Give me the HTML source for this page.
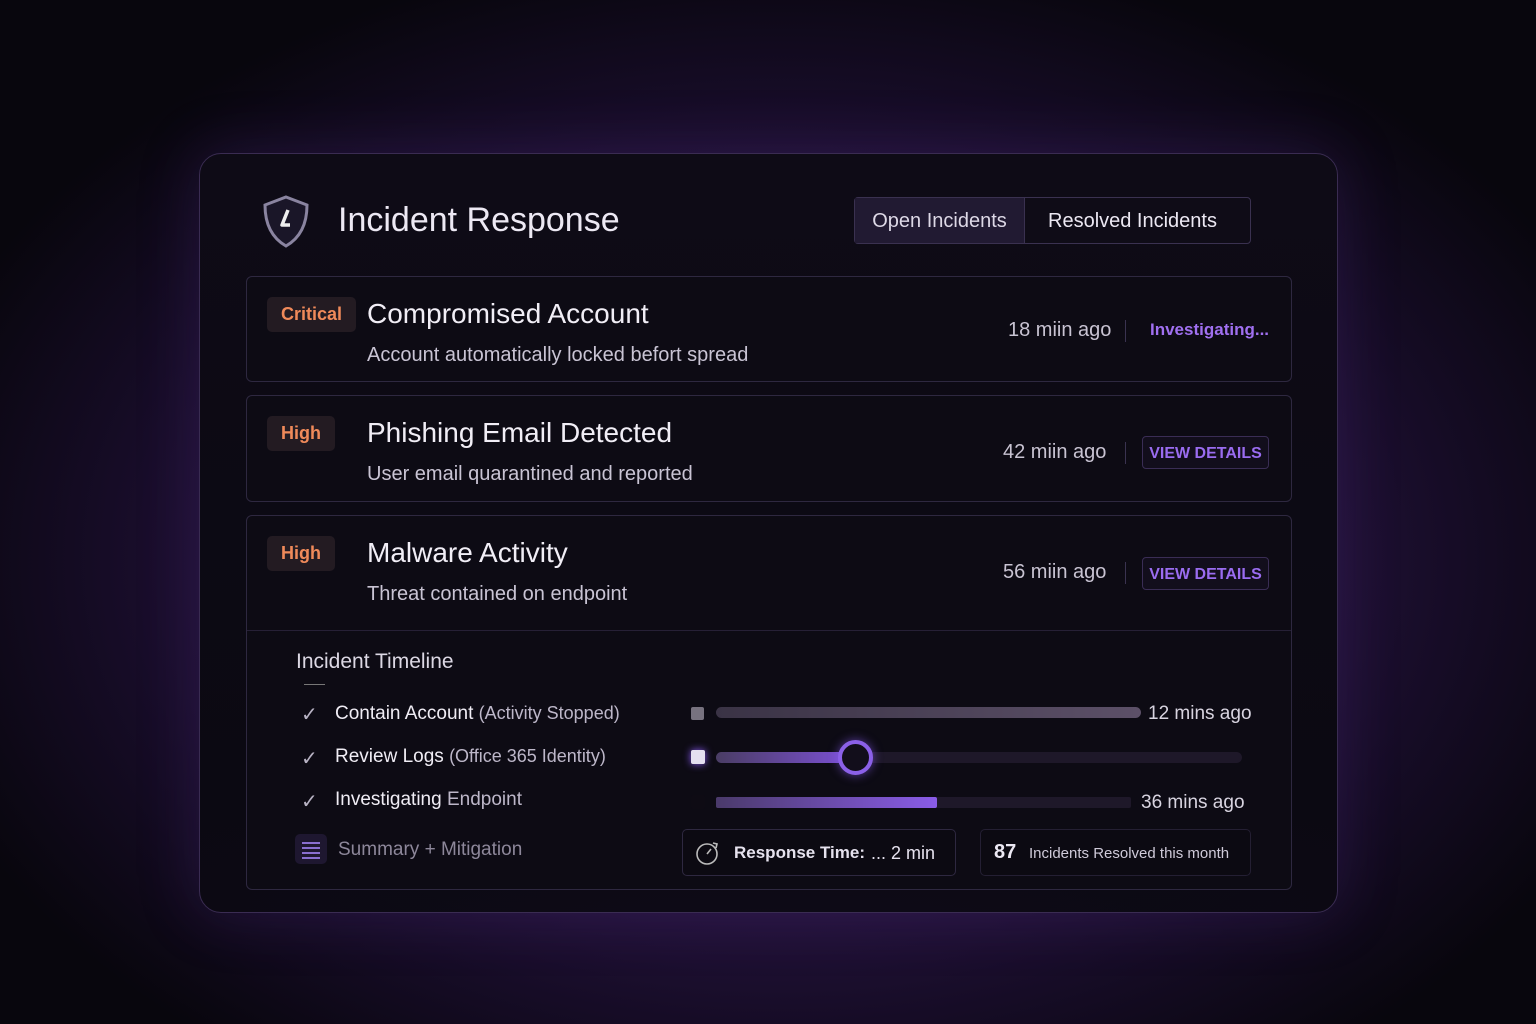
<!DOCTYPE html>
<html><head><meta charset="utf-8"><style>
*{margin:0;padding:0;box-sizing:border-box}
body{width:1536px;height:1024px;overflow:hidden;font-family:"Liberation Sans",sans-serif;color:#e8e4ef;
background:radial-gradient(ellipse 900px 620px at 780px 560px,#3a1f5e 0%,#2a1545 45%,#160c26 75%,#08060d 100%);position:relative}
.panel{position:absolute;left:199px;top:153px;width:1139px;height:760px;border-radius:22px;border:1px solid #3a2c52;
background:linear-gradient(180deg,#0e0b16 0%,#0b0912 85%,rgba(11,9,18,.9) 100%);box-shadow:0 0 60px rgba(90,50,150,.25)}
.abs{position:absolute}
.card{position:absolute;left:246px;width:1046px;border:1px solid #2e2840;border-radius:6px;background:#0d0b14}
.badge{position:absolute;left:20px;top:20px;height:35px;border-radius:5px;background:#231b22;color:#f08a5a;font-size:18px;line-height:35px;padding:0 14px;font-weight:bold}
.title{position:absolute;left:120px;top:21px;font-size:28px;color:#f1eef6}
.sub{position:absolute;left:120px;top:67px;font-size:20px;color:#c9c4d4}
.time{position:absolute;font-size:20px;color:#c8c3d2}
.sep{position:absolute;width:1px;height:22px;background:#3a3350}
.btn{position:absolute;left:895px;width:127px;height:33px;border:1px solid #3a2d55;border-radius:4px;background:#120e1c;color:#9a6cf0;font-weight:bold;font-size:16px;text-align:center;line-height:33px}
.chk{position:absolute;left:301px;font-size:20px;color:#b8b3c4}
.tl{position:absolute;left:335px;font-size:19px;color:#f0edf5}
.tl span{color:#bdb7c9;font-size:18px}
.bar{position:absolute;height:11px;border-radius:6px}
</style></head><body>
<div class="panel"></div>
<svg class="abs" style="left:260px;top:194px" width="52" height="56" viewBox="0 0 52 56">
<path d="M26 3 L47 11 C47 30 40 44 26 52 C12 44 5 30 5 11 Z" fill="#1a1628" stroke="#8a84a0" stroke-width="3"/>
<path d="M28 16 L22 31 L30 31" fill="none" stroke="#eee" stroke-width="3.5" stroke-linejoin="round"/>
</svg>
<div class="abs" style="left:338px;top:201px;font-size:34px;color:#ece8f3">Incident Response</div>
<div class="abs" style="left:854px;top:197px;width:397px;height:47px;border:1px solid #3a3150;border-radius:4px;background:#0f0c17"></div>
<div class="abs" style="left:855px;top:198px;width:170px;height:45px;background:#211a32;border-right:1px solid #3a3150;font-size:20px;color:#ddd8e6;text-align:center;line-height:47px">Open Incidents</div>
<div class="abs" style="left:1025px;top:198px;width:215px;height:45px;font-size:20px;color:#ece8f3;text-align:center;line-height:47px">Resolved Incidents</div>

<div class="card" style="top:276px;height:106px">
<div class="badge">Critical</div>
<div class="title">Compromised Account</div>
<div class="sub">Account automatically locked befort spread</div>
<div class="time" style="left:761px;top:42px">18 miin ago</div>
<div class="sep" style="left:878px;top:43px"></div>
<div class="abs" style="left:903px;top:43px;font-size:17px;font-weight:bold;color:#a070f0">Investigating...</div>
</div>
<div class="card" style="top:395px;height:107px">
<div class="badge">High</div>
<div class="title">Phishing Email Detected</div>
<div class="sub">User email quarantined and reported</div>
<div class="time" style="left:756px;top:45px">42 miin ago</div>
<div class="sep" style="left:878px;top:46px"></div>
<div class="btn" style="top:40px">VIEW DETAILS</div>
</div>
<div class="card" style="top:515px;height:375px">
<div class="badge">High</div>
<div class="title">Malware Activity</div>
<div class="sub">Threat contained on endpoint</div>
<div class="time" style="left:756px;top:45px">56 miin ago</div>
<div class="sep" style="left:878px;top:46px"></div>
<div class="btn" style="top:41px">VIEW DETAILS</div>
<div class="abs" style="left:0;top:114px;width:1044px;height:1px;background:#262036"></div>
</div>

<div class="abs" style="left:296px;top:650px;font-size:21px;color:#dcd8e4">Incident Timeline</div>
<div class="abs" style="left:304px;top:684px;width:21px;height:1px;background:#777"></div>
<div class="chk" style="top:702px">✓</div><div class="tl" style="top:703px">Contain Account <span>(Activity Stopped)</span></div>
<div class="chk" style="top:746px">✓</div><div class="tl" style="top:746px">Review Logs <span>(Office 365 Identity)</span></div>
<div class="chk" style="top:789px">✓</div><div class="tl" style="top:789px">Investigating <span style="font-size:19px">Endpoint</span></div>
<div class="abs" style="left:295px;top:834px;width:32px;height:30px;border-radius:5px;background:#1e1730"></div>
<div class="abs" style="left:302px;top:842px;width:18px;height:2px;background:#8a6fd0;box-shadow:0 5px 0 #8a6fd0,0 10px 0 #8a6fd0,0 15px 0 #8a6fd0"></div>
<div class="abs" style="left:338px;top:839px;font-size:19px;color:#8d879a">Summary + Mitigation</div>

<div class="abs" style="left:691px;top:707px;width:13px;height:13px;background:#77727f;border-radius:2px"></div>
<div class="bar" style="left:716px;top:707px;width:425px;background:linear-gradient(90deg,#3a3345,#5c5068)"></div>
<div class="abs" style="left:1148px;top:703px;font-size:19px;color:#d8d4e0">12 mins ago</div>
<div class="abs" style="left:691px;top:750px;width:14px;height:14px;background:#e4dff0;border-radius:2px;box-shadow:0 0 8px #8b5cf6"></div>
<div class="bar" style="left:716px;top:752px;width:526px;background:#1e1829"></div>
<div class="bar" style="left:716px;top:752px;width:130px;background:linear-gradient(90deg,#4a3d64,#7a50d0)"></div>
<div class="abs" style="left:838px;top:740px;width:35px;height:35px;border-radius:50%;border:4px solid #8b60e8;background:#120e1b;box-shadow:0 0 10px rgba(139,92,246,.6)"></div>
<div class="abs" style="left:691px;top:795px;width:14px;height:14px;background:#0e0b14;border-radius:2px"></div>
<div class="bar" style="left:716px;top:797px;width:415px;background:#1e1829;border-radius:2px"></div>
<div class="bar" style="left:716px;top:797px;width:221px;background:linear-gradient(90deg,#4a3a6a,#8a5ce8);border-radius:2px"></div>
<div class="abs" style="left:1141px;top:792px;font-size:19px;color:#d8d4e0">36 mins ago</div>

<div class="abs" style="left:682px;top:829px;width:274px;height:47px;border:1px solid #2e2840;border-radius:5px;background:#0c0a12"></div>
<svg class="abs" style="left:695px;top:840px" width="26" height="26" viewBox="0 0 26 26"><circle cx="12" cy="14" r="10" fill="none" stroke="#bbb" stroke-width="1.6"/><path d="M12 14 L16 9" stroke="#bbb" stroke-width="1.6"/><path d="M18 3 L22 4 L21 8" fill="none" stroke="#bbb" stroke-width="1.6"/></svg>
<div class="abs" style="left:734px;top:843px;font-size:17px;color:#e6e2ee;font-weight:bold">Response Time:</div>
<div class="abs" style="left:871px;top:843px;font-size:18px;color:#e6e2ee">... 2 min</div>
<div class="abs" style="left:980px;top:829px;width:271px;height:47px;border:1px solid #241f33;border-radius:5px;background:#0c0a12"></div>
<div class="abs" style="left:994px;top:841px;font-size:20px;font-weight:bold;color:#ece8f3">87</div>
<div class="abs" style="left:1029px;top:845px;font-size:15px;color:#cfcad9">Incidents Resolved this month</div>
</body></html>
